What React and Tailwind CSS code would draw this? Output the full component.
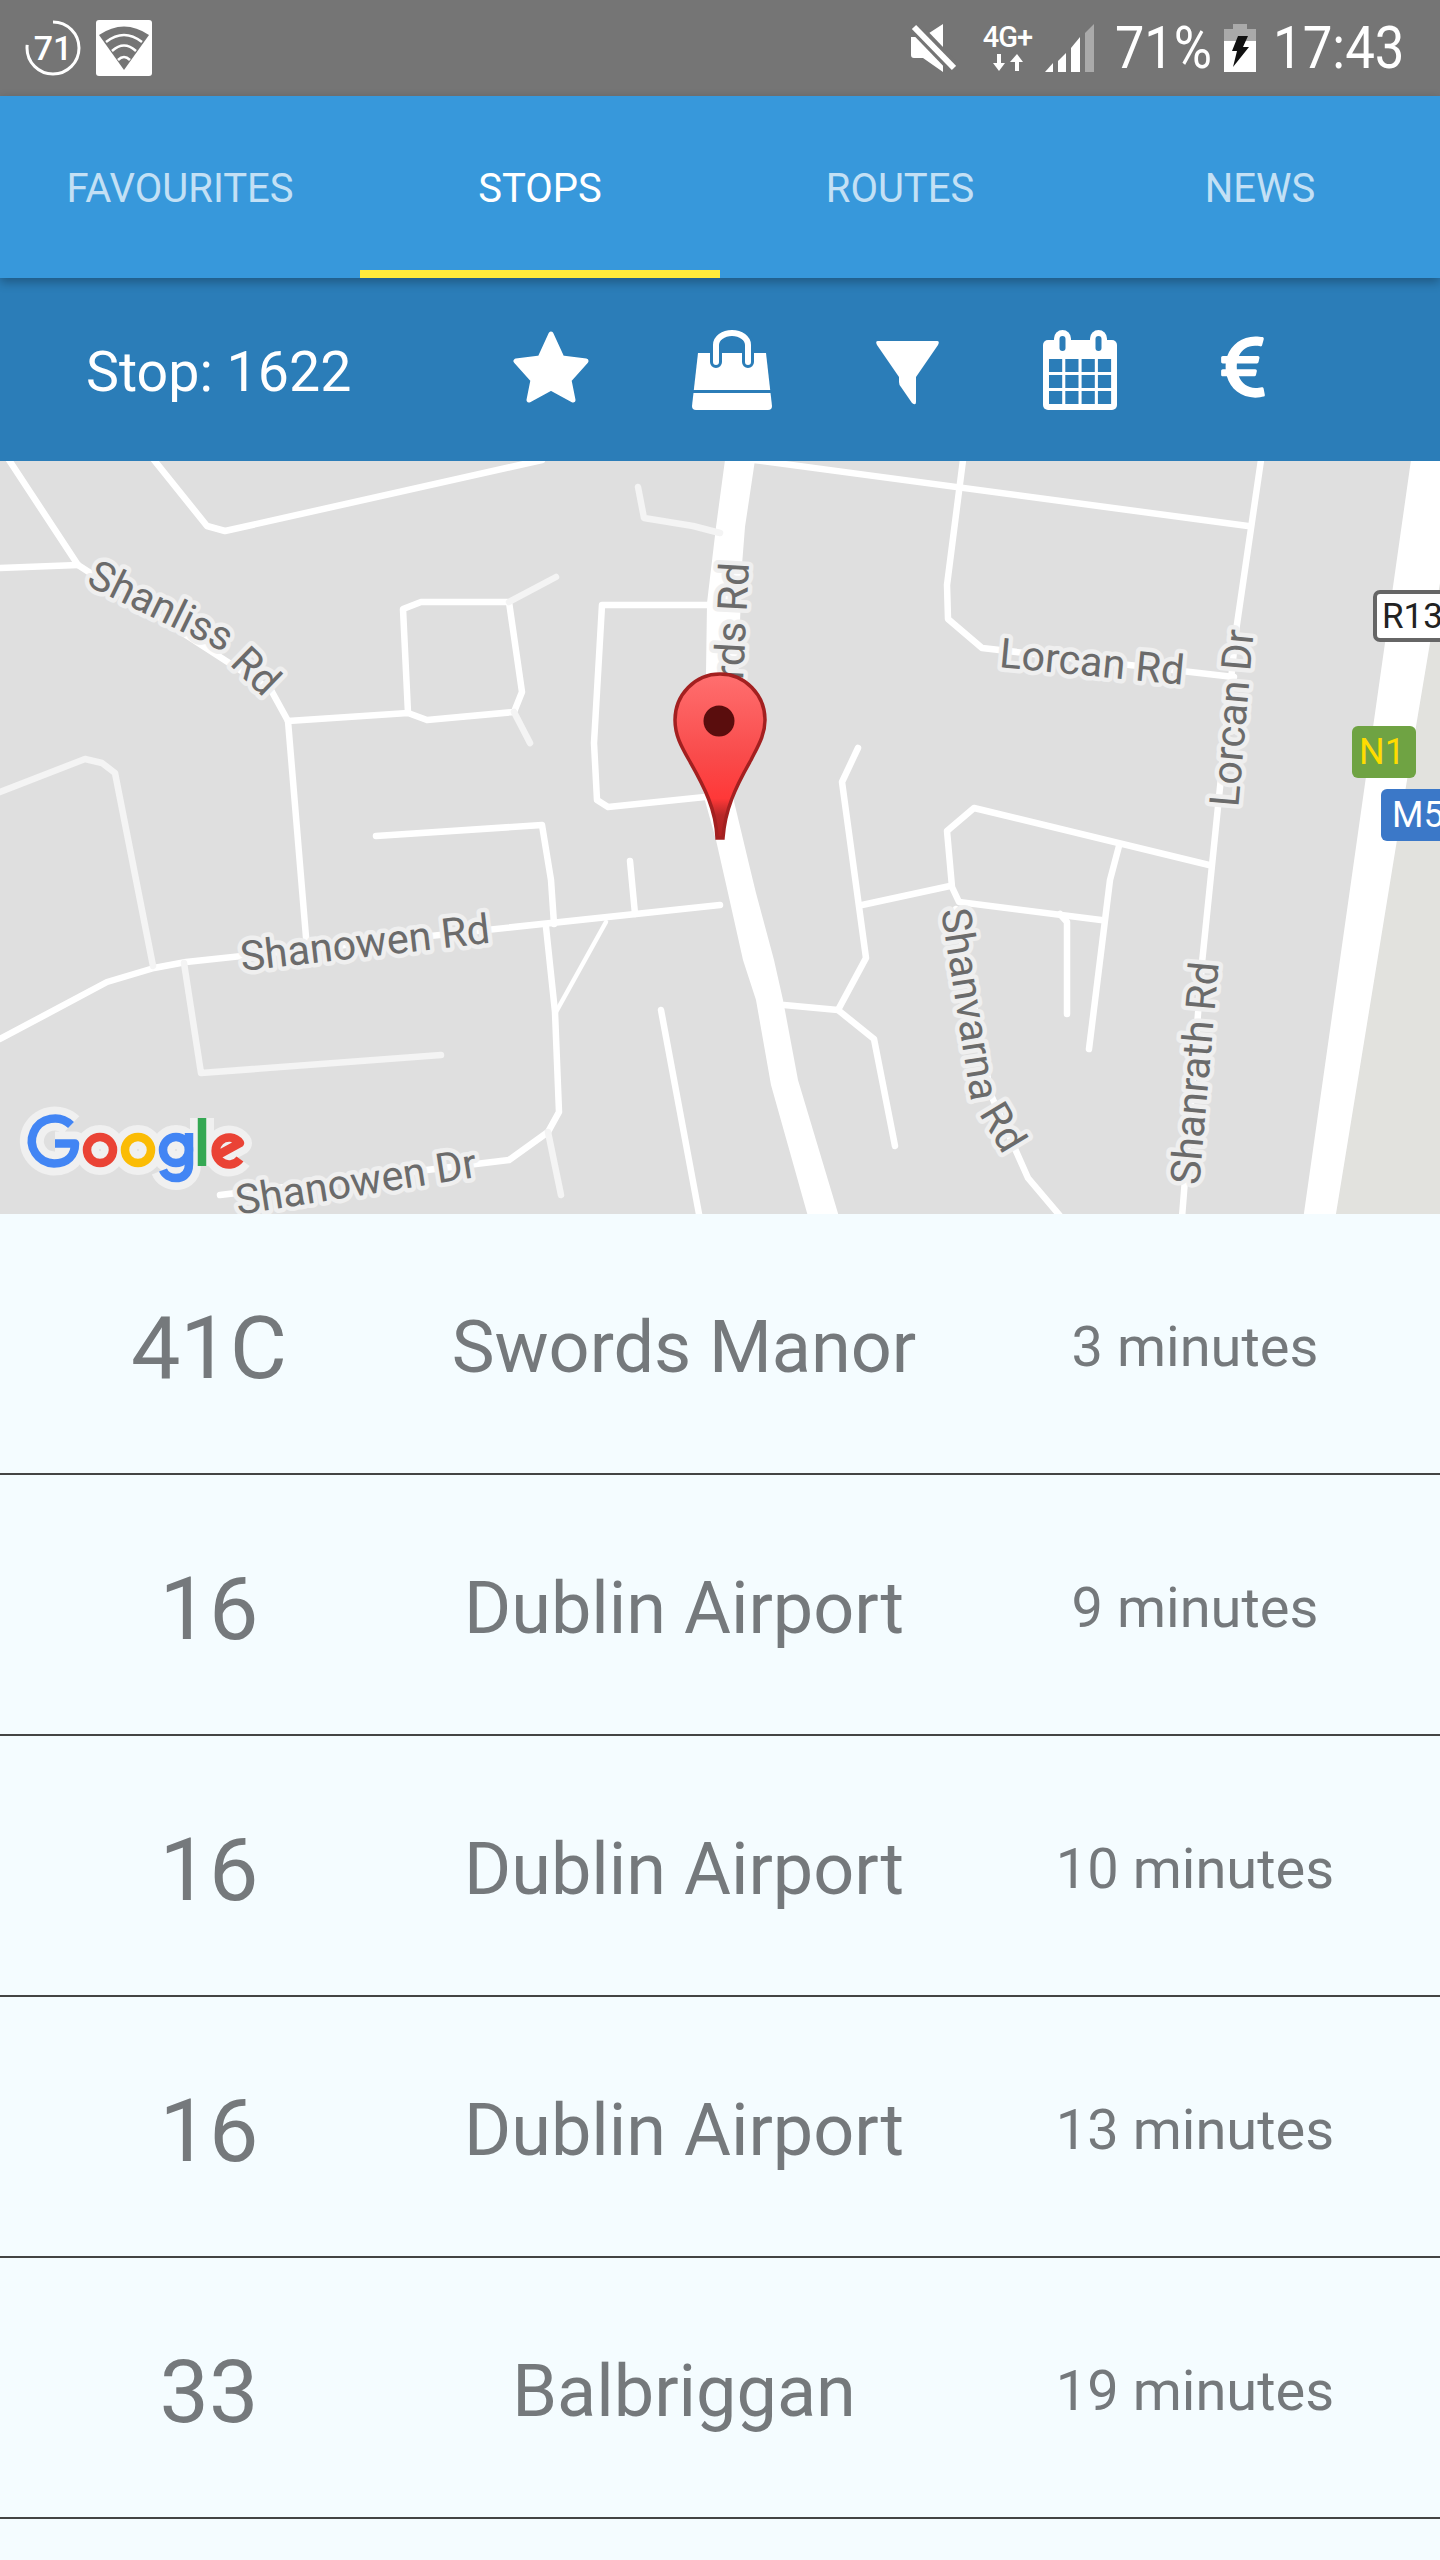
import React from "react";
import { FaEuroSign } from "react-icons/fa";

const BAR = "#2b7db8";
const strong = [
  "9,0 78,105 271,230 288,261",
  "0,108 78,105",
  "154,0 207,66 225,71 542,0",
  "288,261 408,253 427,260 514,252 522,232 509,142 421,142 403,149 408,253",
  "288,261 307,489",
  "0,579 107,522 154,508 186,502 720,445",
  "376,376 542,365 551,420 554,464",
  "546,467 555,552 559,652 548,672 509,700 220,735",
  "630,401 635,454",
  "661,550 702,770",
  "707,145 602,145 594,283 597,340 608,347 705,337",
  "754,0 1248,66",
  "963,0 947,125 948,159 982,188 1234,217",
  "1261,0 1236,171 1202,503 1181,770",
  "858,288 842,322 866,498 838,550 874,579 895,686",
  "784,545 838,550",
  "862,445 950,426",
  "1209,405 974,348 947,371 952,427 959,442 1101,460",
  "1119,386 1110,420 1089,589",
  "1060,454 1067,462 1067,554",
  "956,449 991,635 1028,718 1072,770",
];
const light = [
  "509,142 556,117",
  "514,252 530,283",
  "0,332 85,299 102,303 115,313 153,506",
  "184,503 201,613 441,595",
  "548,672 561,735",
  "638,27 644,58 693,66 720,73",
];
const labels = [
  ["Shanliss", 161, 146, 26],
  ["Rd", 256, 211, 44],
  ["Shanowen Rd", 365, 483, -6.5],
  ["Shanowen Dr", 356, 722, -9],
  ["rds Rd", 732, 161, -87],
  ["Lorcan Rd", 1092, 202, 5.5],
  ["Lorcan Dr", 1232, 258, -85],
  ["Shanvarna", 970, 544, 81],
  ["Rd", 1003, 667, 59],
  ["Shanrath Rd", 1195, 613, -85],
];
const googleLetters = [
  ["M71 665 A23 22.5 0 1 0 54 703.5 C68 703.5 75 695 75 683.5 H55", "#4285f4"],
  ["M87 690 A13 13 0 1 1 113 690 A13 13 0 1 1 87 690 Z", "#ea4335"],
  ["M125 690 A13 13 0 1 1 151 690 A13 13 0 1 1 125 690 Z", "#fbbc05"],
  ["M163 690 A13 13 0 1 1 189 690 A13 13 0 1 1 163 690 Z", "#4285f4"],
  ["M189 673 V704 C189 716 181 718 176 718 C170 718 165 715 163 710", "#4285f4"],
  ["M202 658 V706", "#34a853"],
  ["M240 699 A13.5 13.5 0 1 1 240 683 L218 695", "#ea4335"],
];
const rows = [
  ["41C", "Swords Manor", "3 minutes"],
  ["16", "Dublin Airport", "9 minutes"],
  ["16", "Dublin Airport", "10 minutes"],
  ["16", "Dublin Airport", "13 minutes"],
  ["33", "Balbriggan", "19 minutes"],
];

function MapView() {
  return (
    <svg viewBox="0 1 1440 753" className="block h-[753px] w-full" style={{ fontFamily: "Roboto, sans-serif" }}>
      <defs>
        <linearGradient id="pin" gradientUnits="userSpaceOnUse" x1="0" y1="214" x2="0" y2="378">
          <stop offset="0" stopColor="#ff6f6f" />
          <stop offset="0.5" stopColor="#f94b4b" />
          <stop offset="0.76" stopColor="#ff3838" />
          <stop offset="0.86" stopColor="#b82828" />
          <stop offset="1" stopColor="#b02020" />
        </linearGradient>
      </defs>
      <rect x="0" y="0" width="1440" height="760" fill="#dfdfdf" />
      <polygon points="1440,123 1440,760 1335,760 1397,380" fill="#e2e2de" />
      <polygon points="725,0 755,0 745,67 742,105 738,220 732,333 748,400 756,433 774,500 783,540 798,620 840,760 809,760 771,625 756,540 743,500 728,433 716,380 704,337 706,213 707,143 716,67" fill="#fff" />
      <polygon points="1411,0 1440,0 1440,123 1430,183 1397,380 1335,760 1303,760" fill="#fff" />
      <g fill="none" strokeLinecap="round" strokeLinejoin="round">
        {strong.map((p) => (
          <polyline key={p} points={p} stroke="#fff" strokeWidth="6.5" />
        ))}
        {light.map((p) => (
          <polyline key={p} points={p} stroke="#f4f4f4" strokeWidth="6.5" />
        ))}
        <polyline points="606,462 556,552" stroke="#fff" strokeWidth="4.5" />
      </g>
      <g fill="none" strokeLinejoin="round">
        {googleLetters.map(([d]) => (
          <path key={d} d={d} stroke="#f0f0f0" strokeWidth="24" />
        ))}
        {googleLetters.map(([d, c]) => (
          <path key={d} d={d} stroke={c} strokeWidth="8.5" />
        ))}
      </g>
      {labels.map(([t, x, y, r]) => (
        <text
          key={t + x}
          x={x}
          y={y}
          transform={`rotate(${r} ${x} ${y})`}
          textAnchor="middle"
          dominantBaseline="central"
          fontSize="41.3"
          fill="#6b6b6b"
          stroke="#efefef"
          strokeWidth="9"
          strokeLinejoin="round"
          paintOrder="stroke"
        >
          {t}
        </text>
      ))}
      <g>
        <rect x="1375" y="132" width="80" height="48" rx="5" fill="#fff" stroke="#666" strokeWidth="4" />
        <text x="1382" y="168" fontSize="35" fill="#222">R13</text>
        <rect x="1352" y="266" width="64" height="52" rx="6" fill="#6fa343" />
        <text x="1382" y="304" textAnchor="middle" fontSize="36" fill="#ffdc00">N1</text>
        <rect x="1381" y="329" width="70" height="52" rx="6" fill="#3b78c8" />
        <text x="1392" y="367" fontSize="36" fill="#fff">M5</text>
      </g>
      <path
        d="M717 378 C716 350 705 328 689 300 C681 286 675 275 675 260 A45 46 0 0 1 765 260 C765 275 758 286 751 300 C735 328 725 350 723 378 Z"
        fill="url(#pin)"
        stroke="#a32020"
        strokeWidth="3.5"
      />
      <circle cx="719" cy="261" r="15.5" fill="#5a0d0d" />
    </svg>
  );
}

function Calendar() {
  const cells = [];
  [0, 1, 2].forEach((r) =>
    [0, 1, 2, 3].forEach((c) =>
      cells.push(<rect key={`${r}${c}`} x={6 + c * 16.3} y={29 + r * 16} width="13.2" height="13" fill={BAR} />)
    )
  );
  return (
    <svg viewBox="0 0 74 80" className="ml-[104px] h-[80px] w-[74px] shrink-0">
      <rect x="0" y="10" width="74" height="70" rx="5" fill="#fff" />
      {cells}
      <rect x="11" y="0" width="17" height="24" rx="8.5" fill="#fff" />
      <rect x="47" y="0" width="17" height="24" rx="8.5" fill="#fff" />
      <rect x="16.5" y="6" width="6" height="15" rx="3" fill={BAR} />
      <rect x="52.5" y="6" width="6" height="15" rx="3" fill={BAR} />
    </svg>
  );
}

export default function App() {
  return (
    <div className="h-[2560px] w-[1440px] overflow-hidden bg-[#f4fcff] font-['Roboto',sans-serif]">
      {/* status bar */}
      <div className="flex h-[96px] items-center bg-[#757575] text-white">
        <svg viewBox="0 0 56 56" className="ml-[25px] h-[56px] w-[56px]">
          <circle cx="28" cy="28" r="26" fill="none" stroke="#fff" strokeWidth="3" strokeDasharray="125 39" transform="rotate(-90 28 28)" />
          <text x="28" y="40" textAnchor="middle" fontSize="34" fontWeight="500" fill="#fff" style={{ fontFamily: "Roboto, sans-serif" }}>71</text>
        </svg>
        <svg viewBox="0 0 56 56" className="ml-[15px] h-[56px] w-[56px]">
          <rect width="56" height="56" rx="3" fill="#fff" />
          <path d="M3 15 Q28 -2 53 15 L28 50 Z" fill="#757575" />
          <path d="M10 22 Q28 8 46 22 M16 31 Q28 20 40 31 M22 40 Q28 34 34 40" fill="none" stroke="#fff" strokeWidth="2.5" />
        </svg>
        <div className="ml-auto flex items-center pr-[37px]">
          <svg viewBox="0 0 45 48" className="h-[48px] w-[45px]">
            <path d="M0 13 H12 L32 0 V48 L12 34 H3 Q0 34 0 31 Z" fill="#fff" />
            <line x1="-2" y1="-3" x2="50" y2="51" stroke="#757575" strokeWidth="13" />
            <line x1="3" y1="3" x2="43" y2="44" stroke="#fff" strokeWidth="6" />
          </svg>
          <div className="ml-[27px] flex w-[49px] flex-col items-center">
            <span className="text-[29px] leading-[23px] font-medium tracking-[-1px]">4G+</span>
            <svg viewBox="0 0 30 17" className="mt-[5px] h-[17px] w-[30px]">
              <path d="M4 0 H8 V9 H12 L6 17 L0 9 H4 Z M22 17 H26 V8 H30 L24 0 L17 8 H22 Z" fill="#fff" />
            </svg>
          </div>
          <svg viewBox="0 0 49 48" className="ml-[13px] h-[48px] w-[49px]">
            <polygon points="0,48 8,39 8,48" fill="#fff" />
            <polygon points="13,48 13,37 21,29 21,48" fill="#fff" />
            <polygon points="26,48 26,24 35,13 35,48" fill="#fff" />
            <polygon points="40,48 40,9 49,0 49,48" fill="#aaaaaa" />
          </svg>
          <span className="ml-[21px] inline-block w-[95px] origin-left scale-x-[0.87] text-[60px] leading-[60px] whitespace-nowrap">71%</span>
          <svg viewBox="0 0 32 48" className="ml-[14px] h-[48px] w-[32px]">
            <rect x="0" y="5" width="32" height="43" fill="#fff" />
            <path d="M9 0 H23 V5 H32 V17 H0 V5 H9 Z" fill="#aaaaaa" />
            <path d="M14 12 H24 L19 23 H25 L9 43 L13 27 H8 Z" fill="#111" />
          </svg>
          <span className="ml-[17px] inline-block w-[130px] origin-left scale-x-[0.88] text-[60px] leading-[60px] whitespace-nowrap">17:43</span>
        </div>
      </div>

      {/* tabs */}
      <div className="relative z-10 grid h-[182px] grid-cols-4 bg-[#3798db] shadow-[0_4px_10px_rgba(0,0,0,0.3)]">
        {["FAVOURITES", "STOPS", "ROUTES", "NEWS"].map((t, i) => (
          <div
            key={t}
            className={
              i === 1
                ? "flex items-center justify-center border-b-[8px] border-[#ffeb3b] pt-[12px] text-[40px] text-white"
                : "flex items-center justify-center border-b-[8px] border-transparent pt-[12px] text-[40px] text-[#c3e0f5]"
            }
          >
            {t}
          </div>
        ))}
      </div>

      {/* stop bar */}
      <div className="flex h-[183px] items-center bg-[#2b7db8] pl-[86px] text-white">
        <span className="w-[263px] shrink-0 pt-[6px] text-[55.5px] whitespace-nowrap">Stop: 1622</span>
        <svg viewBox="0 0 76 72" className="mb-[5px] ml-[164px] h-[72px] w-[76px] shrink-0">
          <polygon points="38,3 49,27 73,30 56,49 60,69 38,57 16,69 20,49 3,30 27,27" fill="#fff" stroke="#fff" strokeWidth="5" strokeLinejoin="round" />
        </svg>
        <svg viewBox="0 0 80 80" className="ml-[103px] h-[80px] w-[80px] shrink-0">
          <path d="M6 23 H74 L80 76 Q80 80 76 80 H4 Q0 80 0 76 Z" fill="#fff" />
          <path d="M24 32 V15 A16 12 0 0 1 56 15 V32" fill="none" stroke={BAR} strokeWidth="12" strokeLinecap="round" />
          <path d="M24 32 V15 A16 12 0 0 1 56 15 V32" fill="none" stroke="#fff" strokeWidth="6" strokeLinecap="round" />
          <rect x="0" y="60" width="80" height="3" fill={BAR} />
        </svg>
        <svg viewBox="0 0 63 64" className="ml-[104px] mt-[6px] h-[64px] w-[63px] shrink-0">
          <path d="M2 0 H61 Q64 0 62 4 L40 36 V61 Q40 65 36 62 L25 46 Q23 44 23 41 V36 L1 4 Q-1 0 2 0 Z" fill="#fff" />
        </svg>
        <Calendar />
        <FaEuroSign className="mb-[5px] ml-[101px] h-[70px] w-[50px] shrink-0 text-white" />
      </div>

      <MapView />

      {/* departures */}
      <div className="text-[#75797c]">
        {rows.map(([route, dest, time], i) => (
          <div
            key={i}
            className="grid h-[261px] grid-cols-[418px_532px_490px] items-center border-b-2 border-[#444] pt-[9px] text-center"
          >
            <span className="text-[88px] leading-none">{route}</span>
            <span className="text-[72px] leading-none">{dest}</span>
            <span className="pb-[3px] text-[56px] leading-none">{time}</span>
          </div>
        ))}
      </div>
    </div>
  );
}
